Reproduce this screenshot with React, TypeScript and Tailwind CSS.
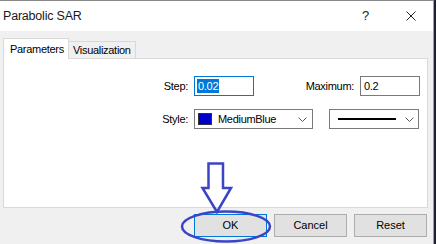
import React from "react";

const font = { fontFamily: '"Liberation Sans", Arial, sans-serif' };

function Chevron() {
  return (
    <svg width="9" height="5" viewBox="0 0 9 5" fill="none">
      <path d="M0.5 0.5L4.5 4.5L8.5 0.5" stroke="#5a5a5a" strokeWidth="1" />
    </svg>
  );
}

export default function App() {
  return (
    <div
      className="relative w-[436px] h-[244px] overflow-hidden flex bg-[#1c2333] text-[11px] text-[#000] tracking-[-0.3px]"
      style={font}
    >
      <div className="w-[434px] h-full flex flex-col border-t border-[#8a8a8a] border-r border-r-[#a0a0a0]">
        {/* title bar */}
        <div className="h-[30px] bg-white flex items-center pl-[3px] pr-[17px]">
          <span className="text-[12.5px] tracking-[-0.2px] text-[#1a1a1a]">Parabolic SAR</span>
          <span className="ml-auto mr-[37px] text-[13px] text-[#222]">?</span>
          <svg width="10" height="10" viewBox="0 0 10 10">
            <path d="M0.5 0.5L9.5 9.5M9.5 0.5L0.5 9.5" stroke="#222" strokeWidth="1" />
          </svg>
        </div>

        {/* body */}
        <div className="flex-1 bg-[#f0f0f0] pl-[3px] pt-[7px] flex flex-col">
          <div className="flex items-end h-[20px]">
            <div className="h-[21px] w-[66px] bg-white border border-b-0 border-[#d9d9d9] flex items-center pl-[6px] -mb-px relative z-10">
              Parameters
            </div>
            <div className="h-[17px] w-[67px] bg-[#f0f0f0] border border-l-0 border-b-0 border-[#d9d9d9] flex items-center pl-[4px]">
              Visualization
            </div>
          </div>

          <div className="w-[425px] h-[150px] bg-white border border-[#d9d9d9] pt-[17px] pl-[151px] flex flex-col gap-[13px]">
            <div className="flex items-center h-[20px]">
              <span className="w-[33px] text-right">Step:</span>
              <div className="ml-[6px] w-[60px] h-[20px] border border-[#0078d7] flex items-center pl-[2px]">
                <span className="bg-[#0078d7] text-white leading-[14px] px-[1px]">0.02</span>
              </div>
              <span className="w-[100px] text-right">Maximum:</span>
              <div className="ml-[6px] w-[60px] h-[20px] border border-[#7a7a7a] flex items-center pl-[3px]">
                0.2
              </div>
            </div>
            <div className="flex items-center h-[20px]">
              <span className="w-[33px] text-right">Style:</span>
              <div className="ml-[6px] w-[119px] h-[20px] border border-[#7a7a7a] flex items-center pl-[3px] pr-[5px]">
                <span className="w-[14px] h-[12px] border border-[#333] bg-[#0000cd]" />
                <span className="ml-[6px]">MediumBlue</span>
                <span className="ml-auto flex">
                  <Chevron />
                </span>
              </div>
              <div className="ml-[16px] w-[90px] h-[20px] border border-[#7a7a7a] flex items-center pl-[8px] pr-[4px]">
                <span className="w-[58px] h-[2px] bg-[#000]" />
                <span className="ml-auto flex">
                  <Chevron />
                </span>
              </div>
            </div>
          </div>

          <div className="mt-[6px] flex justify-end gap-[7px] pr-[6px]">
            <button className="w-[73px] h-[23px] bg-[#e1e1e1] border border-[#0078d7] flex items-center justify-center tracking-normal">
              OK
            </button>
            <button className="w-[73px] h-[23px] bg-[#e1e1e1] border border-[#adadad] flex items-center justify-center tracking-normal">
              Cancel
            </button>
            <button className="w-[73px] h-[23px] bg-[#e1e1e1] border border-[#adadad] flex items-center justify-center tracking-normal">
              Reset
            </button>
          </div>
        </div>
      </div>

      {/* annotation */}
      <svg className="absolute left-0 top-0 pointer-events-none" width="436" height="244" viewBox="0 0 436 244" fill="none">
        <path
          d="M208.5 163.5H223V188H231L217 212L202.5 188H208.5Z"
          stroke="#3a44c4"
          strokeWidth="2.5"
          strokeLinejoin="miter"
        />
        <ellipse cx="226" cy="226.5" rx="44" ry="15" stroke="#3a44c4" strokeWidth="2.5" />
      </svg>
    </div>
  );
}
